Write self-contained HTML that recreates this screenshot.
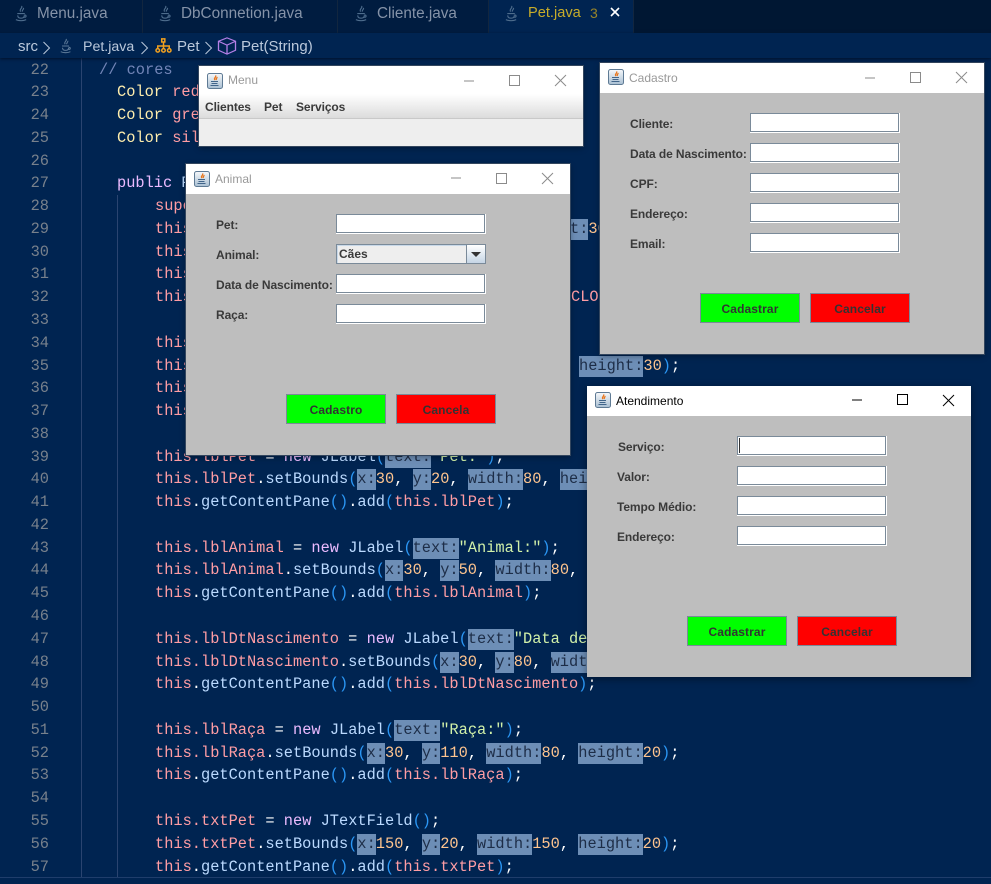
<!DOCTYPE html>
<html><head><meta charset="utf-8"><style>
html,body{margin:0;padding:0;background:#002451}
#r{position:relative;width:991px;height:884px;overflow:hidden;background:#002451;font-family:"Liberation Sans",sans-serif}
.abs,.l,.ln,.tab,.bc,.w,.w>*{position:absolute}
.tabs{position:absolute;left:0;top:0;width:991px;height:33px;background:#001733}
.tab{top:0;height:33px;background:#001c40;border-right:1px solid #12263f;box-sizing:border-box;color:#8593a8;font-size:15.3px;line-height:27px}
.tab span{position:absolute;top:0;white-space:nowrap}
.tab svg{position:absolute;top:5px;color:#4d6c8c}
.crumbs{position:absolute;left:0;top:33px;width:991px;height:25px;background:#002451;box-shadow:0 1px 3px #00112a;z-index:2}
.bc{top:0;color:#bac8db;font-size:15px;line-height:28px;white-space:nowrap}
.code{position:absolute;left:0;top:0;width:991px;height:878px;font-family:"Liberation Mono",monospace;font-size:15.33px;color:#fff}
.l{left:155px;height:23px;line-height:23px;white-space:pre;margin-top:.6px}
.ln{left:0;width:49px;text-align:right;height:23px;line-height:23px;color:#78818c;margin-top:.6px}
u{color:#ff9da4;text-decoration:none}
b{color:#bbdaff;font-weight:normal}
s{color:#d1f1a9;text-decoration:none}
em{color:#ffc58f;font-style:normal}
kbd{color:#2b97f5;font:inherit}
cite{color:#ebbbff;font-style:normal}
var{color:#ffeead;font-style:normal}
i{font-style:normal;background:#6d8eb6;color:#1d2d47;padding:1px 0 2px}
.g{position:absolute;width:1px;background:#2a4470}
.w{width:384px;background:#bebebe;box-sizing:border-box;box-shadow:0 0 0 1px #33465e,0 2px 6px rgba(0,0,0,.35);font-size:12px;color:#333}
.tb{left:0;top:0;width:384px;height:30px;background:#fff;color:#999;font-size:12px;line-height:29px}
.tb .t{position:absolute;left:29px;top:0;white-space:nowrap}
.tb svg{position:absolute}
.lb{font-weight:bold;white-space:nowrap;line-height:22px;height:20px;letter-spacing:-.1px;color:#3a3a3a}
.f{width:150px;height:20px;background:#fff;box-sizing:border-box}
.f:before{content:"";position:absolute;left:0;top:0;width:149px;height:19px;box-sizing:border-box;border:1px solid #7a8a99}
.btn{width:100px;height:30px;box-sizing:border-box;border:1px solid #7a8a99;text-align:center;font-weight:bold;line-height:31px;letter-spacing:.1px}
.gn{background:#0f0}.rd{background:#f00}
</style></head><body><div id="r">
<svg width="0" height="0" style="position:absolute"><defs>
<symbol id="cup" viewBox="0 0 16 18"><g fill="none" stroke="currentColor" stroke-width="1.2"><path d="M8 1c2 2-3 3-1 6M10 3c1 2-2 2-1 4"/><path d="M3.5 9h8M4 11c0 2 1 3 3.500 3S11 13 11 11M11 10.500c2.500 0 2.500 2.500 0 2.500"/><path d="M2 15.500c3 1.500 8 1.500 11 0"/></g></symbol>
<symbol id="jv" viewBox="0 0 16 16"><defs><linearGradient id="jg" x1="0" y1="0" x2="0" y2="1"><stop offset="0" stop-color="#f6f8fa"/><stop offset="1" stop-color="#a9bfd2"/></linearGradient></defs><rect x=".5" y=".5" width="15" height="15" rx="2" fill="url(#jg)" stroke="#5e7a94"/><path d="M8.500 2.500c1.500 1.500-2.500 2.500-.5 4.500M10 4c.5 1-1.500 1.500-.5 3" fill="none" stroke="#e8741a" stroke-width="1.300"/><path d="M4 8.500h7M4.500 10.500h6M3.500 12.500h8" stroke="#41658a" stroke-width="1"/></symbol>
</defs></svg>

<div class="code">
<div class="g" style="left:81px;top:58px;height:820px"></div>
<div class="g" style="left:117px;top:195px;height:683px"></div>
<div class="ln" style="top:58px">22</div><div class="ln" style="top:80.800px">23</div><div class="ln" style="top:103.500px">24</div><div class="ln" style="top:126.300px">25</div><div class="ln" style="top:149.100px">26</div><div class="ln" style="top:171.900px">27</div><div class="ln" style="top:194.600px">28</div><div class="ln" style="top:217.400px">29</div><div class="ln" style="top:240.200px">30</div><div class="ln" style="top:262.900px">31</div><div class="ln" style="top:285.700px">32</div><div class="ln" style="top:308.500px">33</div><div class="ln" style="top:331.200px">34</div><div class="ln" style="top:354px">35</div><div class="ln" style="top:376.800px">36</div><div class="ln" style="top:399.600px">37</div><div class="ln" style="top:422.300px">38</div><div class="ln" style="top:445.100px">39</div><div class="ln" style="top:467.900px">40</div><div class="ln" style="top:490.600px">41</div><div class="ln" style="top:513.400px">42</div><div class="ln" style="top:536.200px">43</div><div class="ln" style="top:558.900px">44</div><div class="ln" style="top:581.700px">45</div><div class="ln" style="top:604.500px">46</div><div class="ln" style="top:627.300px">47</div><div class="ln" style="top:650px">48</div><div class="ln" style="top:672.800px">49</div><div class="ln" style="top:695.600px">50</div><div class="ln" style="top:718.300px">51</div><div class="ln" style="top:741.100px">52</div><div class="ln" style="top:763.900px">53</div><div class="ln" style="top:786.600px">54</div><div class="ln" style="top:809.400px">55</div><div class="ln" style="top:832.200px">56</div><div class="ln" style="top:855px">57</div>

<div class="l" style="left:99px;top:58px;color:#7285b7">// cores</div>
<div class="l" style="left:117px;top:80.800px"><var>Color</var> <u>red</u></div>
<div class="l" style="left:117px;top:103.500px"><var>Color</var> <u>green</u></div>
<div class="l" style="left:117px;top:126.300px"><var>Color</var> <u>silver</u></div>
<div class="l" style="left:117px;top:171.900px"><cite>public</cite> <b>Pet</b></div>
<div class="l" style="top:194.600px"><u>super</u></div>
<div class="l" style="top:217.400px"><u>this</u></div>
<div class="l" style="left:570px;top:217.400px"><i>t:</i><em>30</em></div>
<div class="l" style="top:240.200px"><u>this</u></div>
<div class="l" style="top:262.900px"><u>this</u></div>
<div class="l" style="top:285.700px"><u>this</u></div>
<div class="l" style="left:571px;top:285.700px"><u>CLOSE</u></div>
<div class="l" style="top:331.200px"><u>this</u></div>
<div class="l" style="top:354px"><u>this</u></div>
<div class="l" style="left:579px;top:354px"><i>height:</i><em>30</em><kbd>)</kbd>;</div>
<div class="l" style="top:376.800px"><u>this</u></div>
<div class="l" style="top:399.600px"><u>this</u></div>

<div class="l" style="top:445.100px"><u>this.lblPet</u> = <cite>new</cite> <b>JLabel</b><kbd>(</kbd><i>text:</i><s>"Pet:"</s><kbd>)</kbd>;</div>
<div class="l" style="top:467.900px"><u>this.lblPet</u>.<b>setBounds</b><kbd>(</kbd><i>x:</i><em>30</em>, <i>y:</i><em>20</em>, <i>width:</i><em>80</em>, <i>height:</i><em>20</em><kbd>)</kbd>;</div>
<div class="l" style="top:490.600px"><u>this</u>.<b>getContentPane</b><kbd>()</kbd>.<b>add</b><kbd>(</kbd><u>this.lblPet</u><kbd>)</kbd>;</div>
<div class="l" style="top:536.200px"><u>this.lblAnimal</u> = <cite>new</cite> <b>JLabel</b><kbd>(</kbd><i>text:</i><s>"Animal:"</s><kbd>)</kbd>;</div>
<div class="l" style="top:558.900px"><u>this.lblAnimal</u>.<b>setBounds</b><kbd>(</kbd><i>x:</i><em>30</em>, <i>y:</i><em>50</em>, <i>width:</i><em>80</em>, <i>height:</i><em>20</em><kbd>)</kbd>;</div>
<div class="l" style="top:581.700px"><u>this</u>.<b>getContentPane</b><kbd>()</kbd>.<b>add</b><kbd>(</kbd><u>this.lblAnimal</u><kbd>)</kbd>;</div>
<div class="l" style="top:627.300px"><u>this.lblDtNascimento</u> = <cite>new</cite> <b>JLabel</b><kbd>(</kbd><i>text:</i><s>"Data de Nascimento:"</s><kbd>)</kbd>;</div>
<div class="l" style="top:650px"><u>this.lblDtNascimento</u>.<b>setBounds</b><kbd>(</kbd><i>x:</i><em>30</em>, <i>y:</i><em>80</em>, <i>width:</i><em>80</em>, <i>height:</i><em>20</em><kbd>)</kbd>;</div>
<div class="l" style="top:672.800px"><u>this</u>.<b>getContentPane</b><kbd>()</kbd>.<b>add</b><kbd>(</kbd><u>this.lblDtNascimento</u><kbd>)</kbd>;</div>
<div class="l" style="top:718.300px"><u>this.lblRaça</u> = <cite>new</cite> <b>JLabel</b><kbd>(</kbd><i>text:</i><s>"Raça:"</s><kbd>)</kbd>;</div>
<div class="l" style="top:741.100px"><u>this.lblRaça</u>.<b>setBounds</b><kbd>(</kbd><i>x:</i><em>30</em>, <i>y:</i><em>110</em>, <i>width:</i><em>80</em>, <i>height:</i><em>20</em><kbd>)</kbd>;</div>
<div class="l" style="top:763.900px"><u>this</u>.<b>getContentPane</b><kbd>()</kbd>.<b>add</b><kbd>(</kbd><u>this.lblRaça</u><kbd>)</kbd>;</div>
<div class="l" style="top:809.400px"><u>this.txtPet</u> = <cite>new</cite> <b>JTextField</b><kbd>()</kbd>;</div>
<div class="l" style="top:832.200px"><u>this.txtPet</u>.<b>setBounds</b><kbd>(</kbd><i>x:</i><em>150</em>, <i>y:</i><em>20</em>, <i>width:</i><em>150</em>, <i>height:</i><em>20</em><kbd>)</kbd>;</div>
<div class="l" style="top:855px"><u>this</u>.<b>getContentPane</b><kbd>()</kbd>.<b>add</b><kbd>(</kbd><u>this.txtPet</u><kbd>)</kbd>;</div>
</div>
<div class="abs" style="left:0;top:877px;width:991px;height:7px;background:#002451;border-top:1px solid #1f3d6b;box-sizing:border-box"></div>

<div class="tabs">
 <div class="tab" style="left:0;width:143px"><svg style="left:14px" width="15" height="17"><use href="#cup"/></svg><span style="left:37px">Menu.java</span></div>
 <div class="tab" style="left:143px;width:195px"><svg style="left:15px" width="15" height="17"><use href="#cup"/></svg><span style="left:38px">DbConnetion.java</span></div>
 <div class="tab" style="left:338px;width:151px"><svg style="left:16px" width="15" height="17"><use href="#cup"/></svg><span style="left:39px">Cliente.java</span></div>
 <div class="tab" style="left:489px;width:145px;background:#002451"><svg style="left:15px" width="15" height="17"><use href="#cup"/></svg><span style="left:39px;color:#c7ac2a;font-size:14.6px">Pet.java</span><span style="left:101px;color:#98852a;font-size:14px">3</span>
 <svg style="left:120px;top:6px;color:#fff" width="12" height="12" viewBox="0 0 12 12"><path d="M2 2l8 8M10 2l-8 8" stroke="#fff" stroke-width="1.600"/></svg></div>
</div>
<div class="crumbs">
 <div class="bc" style="left:18px">src</div>
 <svg class="abs" style="left:42px;top:8px" width="9" height="14" viewBox="0 0 9 14"><path d="M1.500 1l6 6-6 6" fill="none" stroke="#bac8db" stroke-width="1"/></svg>
 <svg class="abs" style="left:59px;top:5px;color:#5d7a99" width="14" height="16"><use href="#cup"/></svg>
 <div class="bc" style="left:83px;font-size:14.2px">Pet.java</div>
 <svg class="abs" style="left:140px;top:8px" width="9" height="14" viewBox="0 0 9 14"><path d="M1.500 1l6 6-6 6" fill="none" stroke="#bac8db" stroke-width="1"/></svg>
 <svg class="abs" style="left:154px;top:5px" width="19" height="15" viewBox="0 0 19 17"><g fill="none" stroke="#f0a020" stroke-width="1.700"><rect x="7.500" y="1" width="3.500" height="3.500"/><path d="M9.500 5v4M3 12V9h13v3M9.500 9v3"/><circle cx="3" cy="14" r="2"/><circle cx="9.500" cy="14" r="2"/><circle cx="16" cy="14" r="2"/></g></svg>
 <div class="bc" style="left:177px">Pet</div>
 <svg class="abs" style="left:204px;top:8px" width="9" height="14" viewBox="0 0 9 14"><path d="M1.500 1l6 6-6 6" fill="none" stroke="#bac8db" stroke-width="1"/></svg>
 <svg class="abs" style="left:217px;top:4px" width="20" height="18" viewBox="0 0 20 21" preserveAspectRatio="none"><g fill="none" stroke="#b47fe6" stroke-width="1.300"><path d="M10 1l8.500 4v10.500L10 20l-8.500-4.500V5z"/><path d="M1.500 5L10 9.500 18.500 5M10 9.500V20"/></g></svg>
 <div class="bc" style="left:241px">Pet(String)</div>
</div>

<!-- Menu -->
<div class="w" style="left:199px;top:66px;height:80px;background:#eee">
 <div class="tb" style="height:28px;line-height:28px"><svg style="left:8px;top:7px" width="16" height="16"><use href="#jv"/></svg><div class="t">Menu</div>
  <svg style="left:264px;top:9px" width="12" height="12" viewBox="0 0 12 12"><path d="M1 6h10" stroke="#8b8b8b"/></svg>
  <svg style="left:310px;top:9px" width="12" height="12" viewBox="0 0 12 12"><rect x=".5" y=".5" width="10" height="10" fill="none" stroke="#8b8b8b"/></svg>
  <svg style="left:355px;top:8px" width="13" height="13" viewBox="0 0 13 13"><path d="M1 1l11 11M12 1L1 12" stroke="#8b8b8b"/></svg></div>
 <div style="left:0;top:28px;width:384px;height:24px;background:linear-gradient(#fff,#dcdcdc);border-bottom:1px solid #c9c9c9"></div>
 <div class="lb" style="left:6px;top:30px">Clientes</div><div class="lb" style="left:65px;top:30px">Pet</div><div class="lb" style="left:97px;top:30px">Serviços</div>
</div>

<!-- Cadastro -->
<div class="w" style="left:600px;top:63px;height:291px">
 <div class="tb" style="line-height:31px"><svg style="left:8px;top:6px" width="16" height="16"><use href="#jv"/></svg><div class="t">Cadastro</div>
  <svg style="left:264px;top:9px" width="12" height="12" viewBox="0 0 12 12"><path d="M1 6h10" stroke="#8b8b8b"/></svg>
  <svg style="left:310px;top:9px" width="12" height="12" viewBox="0 0 12 12"><rect x=".5" y=".5" width="10" height="10" fill="none" stroke="#8b8b8b"/></svg>
  <svg style="left:355px;top:8px" width="13" height="13" viewBox="0 0 13 13"><path d="M1 1l11 11M12 1L1 12" stroke="#8b8b8b"/></svg></div>
 <div class="lb" style="left:30px;top:50px">Cliente:</div><div class="f" style="left:150px;top:50px"></div>
 <div class="lb" style="left:30px;top:80px">Data de Nascimento:</div><div class="f" style="left:150px;top:80px"></div>
 <div class="lb" style="left:30px;top:110px">CPF:</div><div class="f" style="left:150px;top:110px"></div>
 <div class="lb" style="left:30px;top:140px">Endereço:</div><div class="f" style="left:150px;top:140px"></div>
 <div class="lb" style="left:30px;top:170px">Email:</div><div class="f" style="left:150px;top:170px"></div>
 <div class="btn gn" style="left:100px;top:230px">Cadastrar</div><div class="btn rd" style="left:210px;top:230px">Cancelar</div>
</div>

<!-- Animal -->
<div class="w" style="left:186px;top:164px;height:291px">
 <div class="tb" style="line-height:30px"><svg style="left:8px;top:7px" width="16" height="16"><use href="#jv"/></svg><div class="t">Animal</div>
  <svg style="left:264px;top:8px" width="12" height="12" viewBox="0 0 12 12"><path d="M1 6h10" stroke="#8b8b8b"/></svg>
  <svg style="left:310px;top:9px" width="12" height="12" viewBox="0 0 12 12"><rect x=".5" y=".5" width="10" height="10" fill="none" stroke="#8b8b8b"/></svg>
  <svg style="left:355px;top:8px" width="13" height="13" viewBox="0 0 13 13"><path d="M1 1l11 11M12 1L1 12" stroke="#8b8b8b"/></svg></div>
 <div class="lb" style="left:30px;top:50px">Pet:</div><div class="f" style="left:150px;top:50px"></div>
 <div class="lb" style="left:30px;top:80px">Animal:</div>
 <div style="left:150px;top:80px;width:150px;height:20px;box-sizing:border-box;border:1px solid #7a8a99;background:#eee;box-shadow:inset 1px 1px 0 #c8d8e8">
  <div style="position:absolute;left:2px;top:0;line-height:19px;font-weight:bold;color:#3a3a3a">Cães</div>
  <div style="position:absolute;right:0;top:0;width:18px;height:18px;border-left:1px solid #7a8a99;background:linear-gradient(#fff,#c5d5e5)"><div style="position:absolute;left:4px;top:7px;width:0;height:0;border-left:5px solid transparent;border-right:5px solid transparent;border-top:5px solid #333"></div></div>
 </div>
 <div class="lb" style="left:30px;top:110px">Data de Nascimento:</div><div class="f" style="left:150px;top:110px"></div>
 <div class="lb" style="left:30px;top:140px">Raça:</div><div class="f" style="left:150px;top:140px"></div>
 <div class="btn gn" style="left:100px;top:230px">Cadastro</div><div class="btn rd" style="left:210px;top:230px">Cancela</div>
</div>

<!-- Atendimento -->
<div class="w" style="left:587px;top:386px;height:291px;box-shadow:0 2px 8px rgba(0,0,0,.4)">
 <div class="tb" style="color:#000;line-height:31px"><svg style="left:8px;top:6px" width="16" height="16"><use href="#jv"/></svg><div class="t">Atendimento</div>
  <svg style="left:264px;top:8px" width="12" height="12" viewBox="0 0 12 12"><path d="M1 6h10" stroke="#000"/></svg>
  <svg style="left:310px;top:8px" width="12" height="12" viewBox="0 0 12 12"><rect x=".5" y=".5" width="10" height="10" fill="none" stroke="#000"/></svg>
  <svg style="left:355px;top:8px" width="13" height="13" viewBox="0 0 13 13"><path d="M1 1l11 11M12 1L1 12" stroke="#000"/></svg></div>
 <div class="lb" style="left:31px;top:50px">Serviço:</div><div class="f" style="left:150px;top:50px"><div style="position:absolute;left:2px;top:2px;width:1px;height:15px;background:#333"></div></div>
 <div class="lb" style="left:30px;top:80px">Valor:</div><div class="f" style="left:150px;top:80px"></div>
 <div class="lb" style="left:30px;top:110px">Tempo Médio:</div><div class="f" style="left:150px;top:110px"></div>
 <div class="lb" style="left:30px;top:140px">Endereço:</div><div class="f" style="left:150px;top:140px"></div>
 <div class="btn gn" style="left:100px;top:230px">Cadastrar</div><div class="btn rd" style="left:210px;top:230px">Cancelar</div>
</div>
</div></body></html>
